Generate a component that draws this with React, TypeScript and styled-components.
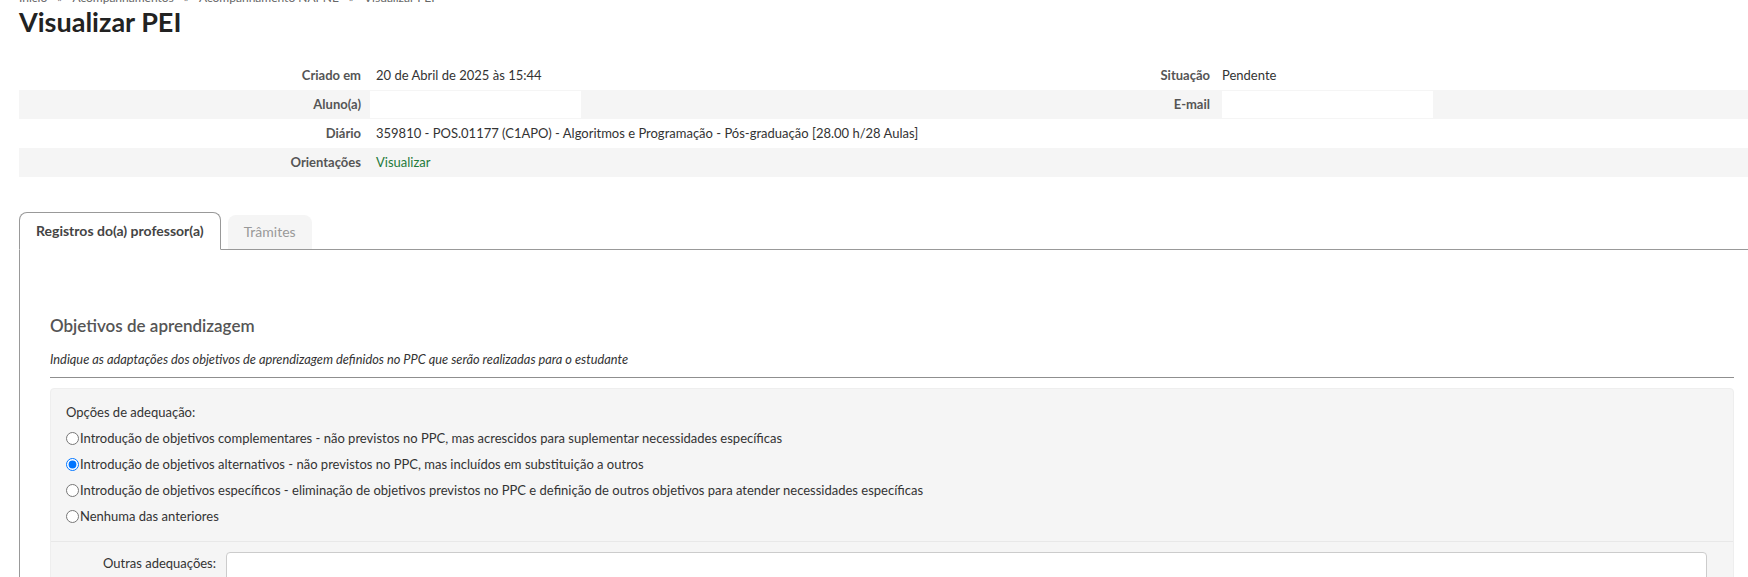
import styled, { createGlobalStyle } from "styled-components";

const GlobalStyle = createGlobalStyle`
  html, body {
    margin: 0;
    padding: 0;
    background: #ffffff;
    overflow: hidden;
  }
  body {
    font-family: Lato, "Open Sans", sans-serif;
    color: #333333;
    font-size: 13px;
  }
`;

const Page = styled.div`
  padding-left: 19px;
  width: 1729px;
  height: 577px;
  overflow: hidden;
`;

const Breadcrumb = styled.div`
  margin-top: -10px;
  height: 16px;
  line-height: 16px;
  font-size: 12px;
  color: #666666;
  display: flex;
  gap: 10px;
`;

const Title = styled.h1`
  margin: 0;
  font-size: 27px;
  font-weight: 700;
  line-height: 32px;
  color: #222222;
`;

const InfoTable = styled.div`
  margin-top: 23px;
  display: grid;
  grid-template-columns: 351px 726px 126px 1fr;
`;

const InfoRow = styled.div<{ $striped?: boolean }>`
  display: contents;
  & > * {
    background: ${(p) => (p.$striped ? "#f5f5f5" : "#ffffff")};
  }
`;

const Label = styled.div<{ $wide?: boolean }>`
  height: 29px;
  line-height: 29px;
  padding-right: ${(p) => (p.$wide ? "12px" : "9px")};
  text-align: right;
  font-weight: 700;
  color: #555555;
`;

const Value = styled.div<{ $span?: number; $flush?: boolean }>`
  height: 29px;
  line-height: 29px;
  padding-left: ${(p) => (p.$flush ? "0" : "6px")};
  color: #333333;
  grid-column: span ${(p) => p.$span ?? 1};
`;

const Blank = styled.div<{ $offset?: number }>`
  width: 211px;
  height: 27px;
  margin: 1px 0 0 ${(p) => -(p.$offset ?? 0)}px;
  background: #ffffff !important;
`;

const Link = styled.a`
  color: #1e7a3a;
  text-decoration: none;
`;

const TabBar = styled.div`
  margin-top: 35px;
  display: flex;
  align-items: flex-end;
  gap: 7px;
`;

const Tab = styled.div<{ $active?: boolean }>`
  height: ${(p) => (p.$active ? "36px" : "34px")};
  line-height: ${(p) => (p.$active ? "36px" : "34px")};
  padding: 0 16px;
  border-radius: 8px 8px 0 0;
  font-size: 14px;
  font-weight: ${(p) => (p.$active ? 700 : 400)};
  color: ${(p) => (p.$active ? "#444444" : "#999999")};
  background: ${(p) => (p.$active ? "#ffffff" : "#f5f5f5")};
  border: ${(p) => (p.$active ? "1px solid #999999" : "none")};
  border-bottom: ${(p) => (p.$active ? "1px solid #ffffff" : "none")};
  margin-bottom: ${(p) => (p.$active ? "-1px" : "0")};
  position: relative;
  z-index: 1;
`;

const Panel = styled.div`
  border-top: 1px solid #999999;
  border-left: 1px solid #999999;
  padding: 64px 14px 0 30px;
`;

const SectionTitle = styled.h4`
  margin: 0;
  font-size: 17px;
  font-weight: 600;
  line-height: 24px;
  color: #555555;
`;

const Hint = styled.p`
  margin: 11px 0 0;
  font-size: 12.8px;
  font-style: italic;
  line-height: 20px;
  color: #333333;
`;

const Rule = styled.hr`
  margin: 8px 0 0;
  border: none;
  border-top: 1px solid #8f8f8f;
`;

const Fieldset = styled.div`
  margin-top: 10px;
  background: #f5f5f5;
  border: 1px solid #eeeeee;
  border-radius: 4px;
`;

const Options = styled.div`
  padding: 10px 15px 12px;
  border-bottom: 1px solid #e8e8e8;
`;

const OptionLine = styled.label`
  display: flex;
  align-items: center;
  height: 26px;
  color: #333333;

  input {
    margin: 0 1px 0 0;
    width: 13px;
    height: 13px;
  }
`;

const FieldRow = styled.div`
  display: flex;
  align-items: flex-start;
  padding: 10px 26px 0 0;
`;

const FieldLabel = styled.div`
  width: 165px;
  padding-right: 10px;
  text-align: right;
  line-height: 22px;
  color: #333333;
`;

const TextBox = styled.div`
  flex: 1;
  height: 60px;
  background: #ffffff;
  border: 1px solid #cccccc;
  border-radius: 4px;
`;

const options = [
  {
    text: "Introdução de objetivos complementares - não previstos no PPC, mas acrescidos para suplementar necessidades específicas",
    checked: false,
  },
  {
    text: "Introdução de objetivos alternativos - não previstos no PPC, mas incluídos em substituição a outros",
    checked: true,
  },
  {
    text: "Introdução de objetivos específicos - eliminação de objetivos previstos no PPC e definição de outros objetivos para atender necessidades específicas",
    checked: false,
  },
  { text: "Nenhuma das anteriores", checked: false },
];

export default function App() {
  return (
    <>
      <GlobalStyle />
      <Page>
        <Breadcrumb>
          <span>Início</span>
          <span>»</span>
          <span>Acompanhamentos</span>
          <span>»</span>
          <span>Acompanhamento NAPNE</span>
          <span>»</span>
          <span>Visualizar PEI</span>
        </Breadcrumb>
        <Title>Visualizar PEI</Title>

        <InfoTable>
          <InfoRow>
            <Label>Criado em</Label>
            <Value>20 de Abril de 2025 às 15:44</Value>
            <Label $wide>Situação</Label>
            <Value $flush>Pendente</Value>
          </InfoRow>
          <InfoRow $striped>
            <Label>Aluno(a)</Label>
            <Value>
              <Blank $offset={6} />
            </Value>
            <Label $wide>E-mail</Label>
            <Value $flush>
              <Blank />
            </Value>
          </InfoRow>
          <InfoRow>
            <Label>Diário</Label>
            <Value $span={3}>
              359810 - POS.01177 (C1APO) - Algoritmos e Programação - Pós-graduação [28.00 h/28 Aulas]
            </Value>
          </InfoRow>
          <InfoRow $striped>
            <Label>Orientações</Label>
            <Value $span={3}>
              <Link href="#">Visualizar</Link>
            </Value>
          </InfoRow>
        </InfoTable>

        <TabBar>
          <Tab $active>Registros do(a) professor(a)</Tab>
          <Tab>Trâmites</Tab>
        </TabBar>
        <Panel>
          <SectionTitle>Objetivos de aprendizagem</SectionTitle>
          <Hint>
            Indique as adaptações dos objetivos de aprendizagem definidos no PPC que serão realizadas para o estudante
          </Hint>
          <Rule />
          <Fieldset>
            <Options>
              <OptionLine as="div">Opções de adequação:</OptionLine>
              {options.map((o) => (
                <OptionLine key={o.text}>
                  <input type="radio" name="adequacao" defaultChecked={o.checked} />
                  {o.text}
                </OptionLine>
              ))}
            </Options>
            <FieldRow>
              <FieldLabel>Outras adequações:</FieldLabel>
              <TextBox />
            </FieldRow>
          </Fieldset>
        </Panel>
      </Page>
    </>
  );
}
